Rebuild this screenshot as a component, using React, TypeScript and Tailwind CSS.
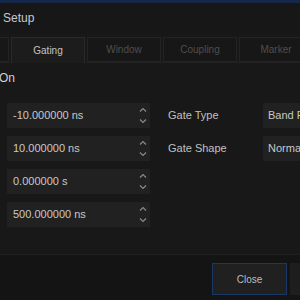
import React from "react";

const Chevron = ({ up }: { up?: boolean }) => (
  <svg width="8" height="5" viewBox="0 0 8 5" className="block">
    <polyline
      points={up ? "1,4.5 4,1.5 7,4.5" : "1,0.5 4,3.5 7,0.5"}
      fill="none"
      stroke="#8a8a8a"
      strokeWidth="1.2"
    />
  </svg>
);

const NumField = ({ value }: { value: string }) => (
  <div className="h-[25px] w-[143px] bg-[#212121] flex items-center justify-between pl-[6px] pr-[3px]">
    <span className="text-[11px] text-[#c8c8c8] whitespace-nowrap">{value}</span>
    <div className="flex flex-col gap-[7px] items-center">
      <Chevron up />
      <Chevron />
    </div>
  </div>
);

export default function App() {
  const tabs = ["Time", "Gating", "Window", "Coupling", "Marker"];
  return (
    <div className="w-[300px] h-[300px] overflow-hidden flex flex-col bg-[#181818] font-['Liberation_Sans',Arial,sans-serif]">
      <div className="h-[3px] shrink-0 bg-[#15284a]" />
      <div className="h-[30px] shrink-0 flex items-center text-[12px] text-[#c8c8d0] bg-[#171717]">
        <span className="w-[3px] shrink-0 flex justify-end whitespace-nowrap">
          <span className="text-[#b07040]">Time Domain&nbsp;</span>
        </span>
        <span>Setup</span>
      </div>
      <div className="h-[4px] shrink-0" />
      <div className="flex gap-[2px] ml-[-65px] h-[26px] shrink-0 border-b border-[#222222]">
        {tabs.map((t) => {
          const active = t === "Gating";
          return (
            <div
              key={t}
              className={
                active
                  ? "w-[74px] shrink-0 flex items-center justify-center text-[10px] text-[#c4c4c4] bg-[#1c1c1c] border border-b-0 border-[#2a2a2a] mb-[-1px]"
                  : "w-[74px] shrink-0 flex items-center justify-center text-[10px] text-[#4e4e4e] bg-[#171717] border border-[#232323]"
              }
            >
              {t}
            </div>
          );
        })}
      </div>
      <div className="h-[30px] shrink-0 flex items-center text-[12px] text-[#d0d0d0]">
        <span className="ml-[-1px]">On</span>
      </div>
      <div className="mt-[10px] flex">
        <div className="ml-[7px] flex flex-col gap-[8px]">
          <NumField value="-10.000000 ns" />
          <NumField value="10.000000 ns" />
          <NumField value="0.000000 s" />
          <NumField value="500.000000 ns" />
        </div>
        <div className="ml-[18px] flex flex-col gap-[8px]">
          {[
            ["Gate Type", "Band Pass"],
            ["Gate Shape", "Normal"],
          ].map(([l, v]) => (
            <div key={l} className="flex h-[25px] items-center">
              <span className="w-[95px] shrink-0 text-[11px] text-[#c0c0c0]">{l}</span>
              <div className="h-[25px] w-[120px] shrink-0 bg-[#212121] flex items-center pl-[5px] text-[11px] text-[#c8c8c8] whitespace-nowrap">
                {v}
              </div>
            </div>
          ))}
        </div>
      </div>
      <div className="flex-1" />
      <div className="h-[1px] shrink-0 bg-[#1f1f1f]" />
      <div className="h-[45px] shrink-0 bg-[#141414] flex pt-[8px] pl-[212px] gap-[3px]">
        <button className="w-[75px] h-[32px] shrink-0 bg-[#202020] border border-[#1a3866] text-[10px] text-[#bcbcbc] flex items-center justify-center">
          Close
        </button>
        <div className="w-[75px] h-[32px] shrink-0 bg-[#1e1e1e]" />
      </div>
    </div>
  );
}
